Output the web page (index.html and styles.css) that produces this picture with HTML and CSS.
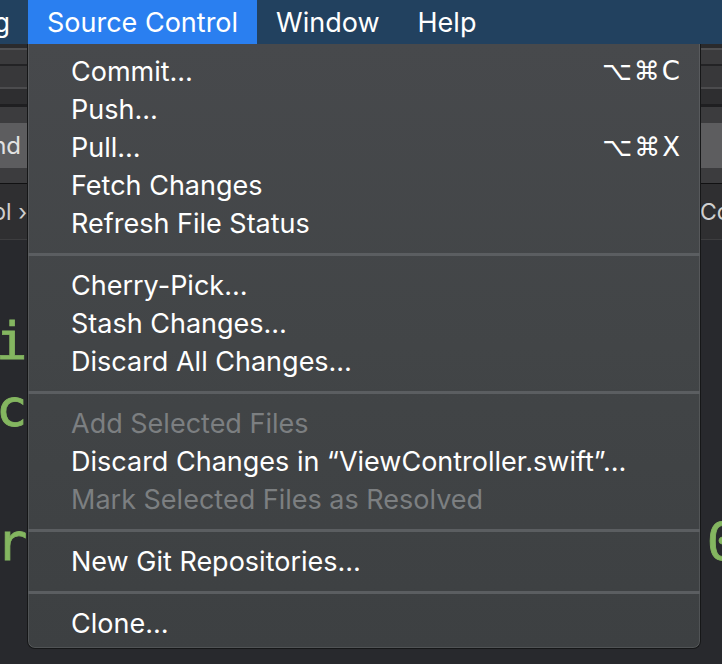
FILE: index.html
```html
<!DOCTYPE html>
<html lang="en">
<head>
<meta charset="utf-8">
<title>Source Control menu</title>
<link rel="stylesheet" href="styles.css">
</head>
<body>
<div class="screen">
  <header class="menubar">
    <div class="mb-item mb-cut"><span>Debug</span></div>
    <div class="mb-item mb-active">Source Control</div>
    <div class="mb-item">Window</div>
    <div class="mb-item">Help</div>
  </header>

  <div class="window">
    <div class="tb tb-a"></div>
    <div class="tb tb-b"></div>
    <div class="tb tb-c"></div>
    <div class="tb tb-d"></div>
    <div class="tb tb-e"></div>
    <div class="tb tb-f"></div>
    <div class="tb tb-g"></div>
    <div class="tb tb-h"></div>
    <div class="tabbar">
      <div class="tab tab-left"><span>Frontend</span></div>
      <div class="tab tab-right"></div>
    </div>
    <div class="jumpbar">
      <div class="crumb crumb-left"><span>Source Control ›</span></div>
      <div class="crumb crumb-right"><span>Controller</span></div>
    </div>
    <div class="editor">
      <div class="code-line"><span class="code-left">i</span><span class="code-right"></span></div>
      <div class="code-line"><span class="code-left">c</span><span class="code-right"></span></div>
      <div class="code-line"><span class="code-left"></span><span class="code-right"></span></div>
      <div class="code-line"><span class="code-left">r</span><span class="code-right">0</span></div>
    </div>
  </div>

  <nav class="menu">
    <div class="menu-item"><span class="label">Commit…</span><span class="shortcut">⌥⌘C</span></div>
    <div class="menu-item"><span class="label">Push…</span></div>
    <div class="menu-item"><span class="label">Pull…</span><span class="shortcut">⌥⌘X</span></div>
    <div class="menu-item"><span class="label">Fetch Changes</span></div>
    <div class="menu-item"><span class="label">Refresh File Status</span></div>
    <div class="menu-sep"></div>
    <div class="menu-item"><span class="label">Cherry-Pick…</span></div>
    <div class="menu-item"><span class="label">Stash Changes…</span></div>
    <div class="menu-item"><span class="label">Discard All Changes…</span></div>
    <div class="menu-sep"></div>
    <div class="menu-item disabled"><span class="label">Add Selected Files</span></div>
    <div class="menu-item"><span class="label">Discard Changes in “ViewController.swift”…</span></div>
    <div class="menu-item disabled"><span class="label">Mark Selected Files as Resolved</span></div>
    <div class="menu-sep"></div>
    <div class="menu-item"><span class="label">New Git Repositories…</span></div>
    <div class="menu-sep"></div>
    <div class="menu-item"><span class="label">Clone…</span></div>
  </nav>
</div>
</body>
</html>
```

FILE: styles.css
```css
* {
  box-sizing: border-box;
  margin: 0;
  padding: 0;
}

html,
body {
  width: 722px;
  height: 664px;
  overflow: hidden;
}

body {
  background: #28292d;
  font-family: Inter, "Noto Sans", "DejaVu Sans", sans-serif;
}

.screen {
  position: relative;
  width: 722px;
  height: 664px;
  display: flex;
  flex-direction: column;
  overflow: hidden;
}

/* ---------- menu bar ---------- */
.menubar {
  flex: none;
  height: 44px;
  display: flex;
  align-items: stretch;
  background: #22415f;
  color: #ffffff;
  font-size: 27px;
}

.mb-item {
  display: flex;
  align-items: center;
  padding: 0 19px;
  white-space: nowrap;
}

.mb-cut {
  width: 28px;
  padding: 0 18px 0 0;
  justify-content: flex-end;
  overflow: hidden;
}

.mb-active {
  background: #2a7ff0;
}

/* ---------- background Xcode window ---------- */
.window {
  flex: 1;
  display: flex;
  flex-direction: column;
  min-height: 0;
}

.tb { flex: none; }
.tb-a { height: 4px; background: #2a2a2c; }
.tb-b { height: 2px; background: #505052; }
.tb-c { height: 14px; background: #3b3b3d; }
.tb-d { height: 2px; background: #232325; }
.tb-e { height: 21px; background: #38383a; }
.tb-f { height: 2px; background: #4c4c4e; }
.tb-g { height: 15px; background: #2e2e30; }
.tb-h { height: 3px; background: #1f1f21; }

.tabbar {
  flex: none;
  height: 77px;
  padding: 16px 0 15px;
  display: flex;
  justify-content: space-between;
  background: #3c3c3e;
  border-bottom: 1px solid #111112;
}

.tab {
  background: #5d5d5f;
  color: #e2e2e2;
  font-size: 24px;
  display: flex;
  align-items: center;
  overflow: hidden;
  white-space: nowrap;
}

.tab-left {
  width: 28px;
  justify-content: flex-end;
  padding-right: 7px;
}

.tab-right {
  width: 22px;
}

.jumpbar {
  flex: none;
  height: 56px;
  display: flex;
  justify-content: space-between;
  align-items: center;
  background: #2f2f31;
  border-bottom: 1px solid #3d3d3f;
  color: #cfcfcf;
  font-size: 23px;
}

.crumb {
  display: flex;
  overflow: hidden;
  white-space: nowrap;
}

.crumb-left {
  width: 28px;
  justify-content: flex-end;
  padding-right: 1px;
}

.crumb-right {
  width: 22px;
  justify-content: flex-start;
}

.editor {
  flex: 1;
  background: #28292d;
  padding-top: 68px;
  font-family: "DejaVu Sans Mono", "Liberation Mono", monospace;
  font-size: 52px;
  line-height: 67px;
  color: #84b660;
}

.code-line {
  height: 67px;
  display: flex;
  justify-content: space-between;
  margin-left: -4px;
  margin-right: -16px;
  white-space: pre;
  -webkit-text-stroke: 0.8px #84b660;
}

/* ---------- dropdown menu (overlay) ---------- */
.menu {
  position: absolute;
  left: 27px;
  top: 44px;
  width: 674px;
  display: flex;
  flex-direction: column;
  padding: 8px 0 6px;
  background: linear-gradient(180deg, #47494c 0%, #424547 50%, #3d4042 100%);
  border: 1px solid #161718;
  border-top: none;
  border-radius: 0 0 8px 8px;
  box-shadow:
    inset 1px 0 0 rgba(255, 255, 255, 0.10),
    inset -1px 0 0 rgba(255, 255, 255, 0.10),
    inset 0 -1px 0 rgba(255, 255, 255, 0.10);
  color: #ffffff;
  font-size: 27px;
}

.menu-item {
  height: 38px;
  display: flex;
  align-items: center;
  justify-content: space-between;
  padding: 0 18px 0 43px;
  white-space: nowrap;
}

.menu-item.disabled {
  color: #7c7f81;
}

.shortcut {
  font-family: "DejaVu Sans", Inter, sans-serif;
  font-size: 26px;
  letter-spacing: 2px;
}

.menu-sep {
  height: 24px;
  display: flex;
  align-items: center;
}

.menu-sep::before {
  content: "";
  display: block;
  width: 100%;
  height: 3px;
  background: #5b5e61;
}
```
